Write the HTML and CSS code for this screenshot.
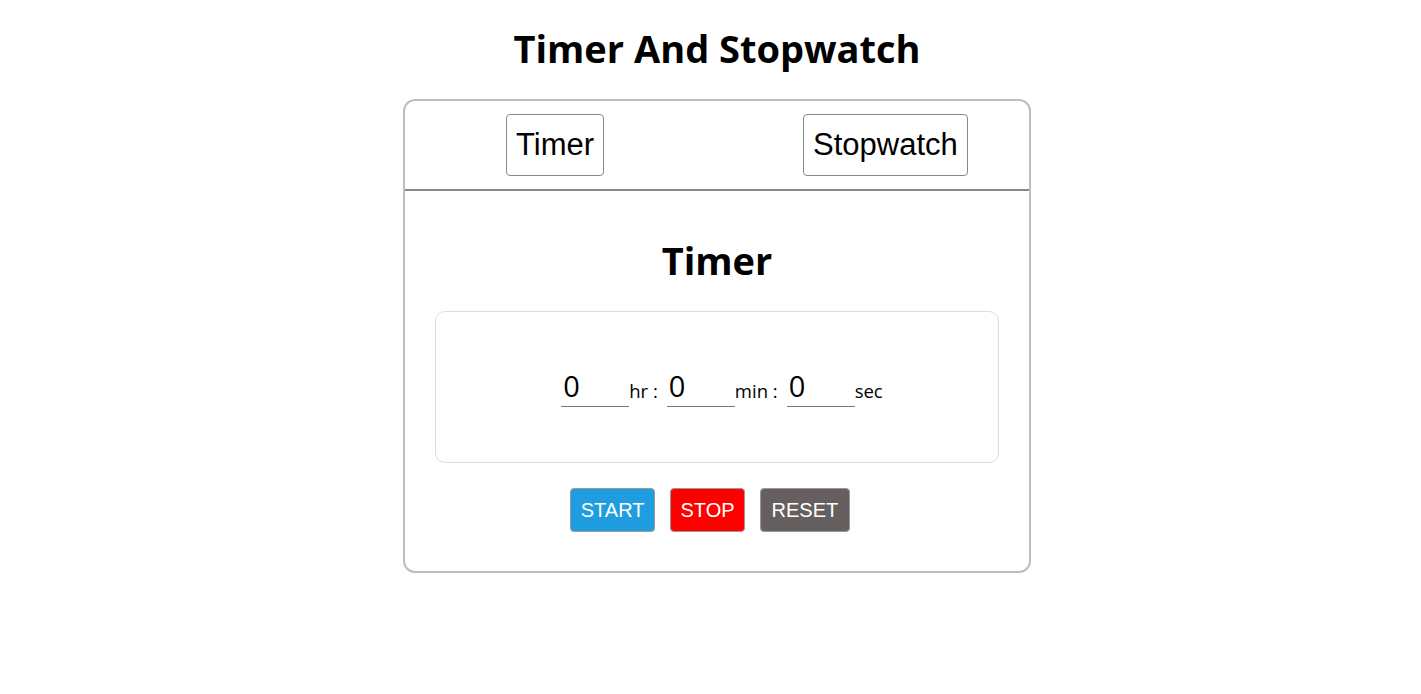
FILE: index.html
```html
<!DOCTYPE html>
<html lang="en">
<head>
<meta charset="utf-8">
<title>Timer And Stopwatch</title>
<link rel="stylesheet" href="styles.css">
</head>
<body>
<h1 class="page-title">Timer And Stopwatch</h1>
<div class="card">
  <div class="tabs">
    <button class="tab">Timer</button>
    <button class="tab">Stopwatch</button>
  </div>
  <div class="panel">
    <h2 class="panel-title">Timer</h2>
    <div class="time-box">
      <input class="time-input" type="text" value="0"><span class="unit">hr :</span>
      <input class="time-input" type="text" value="0"><span class="unit">min :</span>
      <input class="time-input" type="text" value="0"><span class="unit">sec</span>
    </div>
    <div class="controls">
      <button class="ctl ctl-start">START</button>
      <button class="ctl ctl-stop">STOP</button>
      <button class="ctl ctl-reset">RESET</button>
    </div>
  </div>
</div>
</body>
</html>
```

FILE: styles.css
```css
* { box-sizing: border-box; }

body {
  margin: 0;
  padding-left: 13px;
  font-family: "Open Sans", "Noto Sans", sans-serif;
  color: #000;
  background: #fff;
}

.page-title {
  text-align: center;
  font-size: 38px;
  font-weight: 700;
  margin: 21px 0 24px;
  line-height: 54px;
}

.card {
  width: 628px;
  margin: 0 auto;
  border: 2px solid #bdbdbd;
  border-radius: 12px;
}

.tabs {
  display: flex;
  gap: 199px;
  padding: 13px 0 13px 101px;
  border-bottom: 2px solid #888;
}

.tab {
  height: 62px;
  padding: 0 9px;
  font-family: "Liberation Sans", Arial, sans-serif;
  font-size: 31px;
  background: #fff;
  color: #000;
  border: 1px solid #888;
  border-radius: 4px;
}

.panel {
  padding: 0 30px 39px;
}

.panel-title {
  text-align: center;
  font-size: 38px;
  font-weight: 700;
  margin: 0;
  padding-top: 41px;
  line-height: 56px;
  margin-bottom: 23px;
}

.time-box {
  height: 152px;
  border: 1px solid #dcdcdc;
  border-radius: 10px;
  display: flex;
  align-items: center;
  justify-content: center;
  padding-bottom: 2px;
  padding-left: 10px;
}

.time-input {
  width: 68px;
  border: none;
  border-bottom: 1px solid #777;
  font-family: "Open Sans", "Noto Sans", sans-serif;
  font-size: 29px;
  line-height: 38px;
  height: 42px;
  padding: 0 2px;
  color: #000;
  outline: none;
}

.unit {
  font-size: 18.5px;
  margin: 0 9px 0 0;
  padding-top: 8px;
}

.unit:last-child { margin-right: 0; }

.controls {
  display: flex;
  justify-content: center;
  gap: 15px;
  margin-top: 25px;
  margin-right: 14px;
}

.ctl {
  height: 44px;
  padding: 0 10px;
  font-family: "Liberation Sans", Arial, sans-serif;
  font-size: 20px;
  color: #fff;
  border: 1px solid #999;
  border-radius: 4px;
}

.ctl-start { background: #209ce1; }
.ctl-stop { background: #ff0000; padding: 0 9px; }
.ctl-reset { background: #665f5f; padding: 0 11px; }
```
